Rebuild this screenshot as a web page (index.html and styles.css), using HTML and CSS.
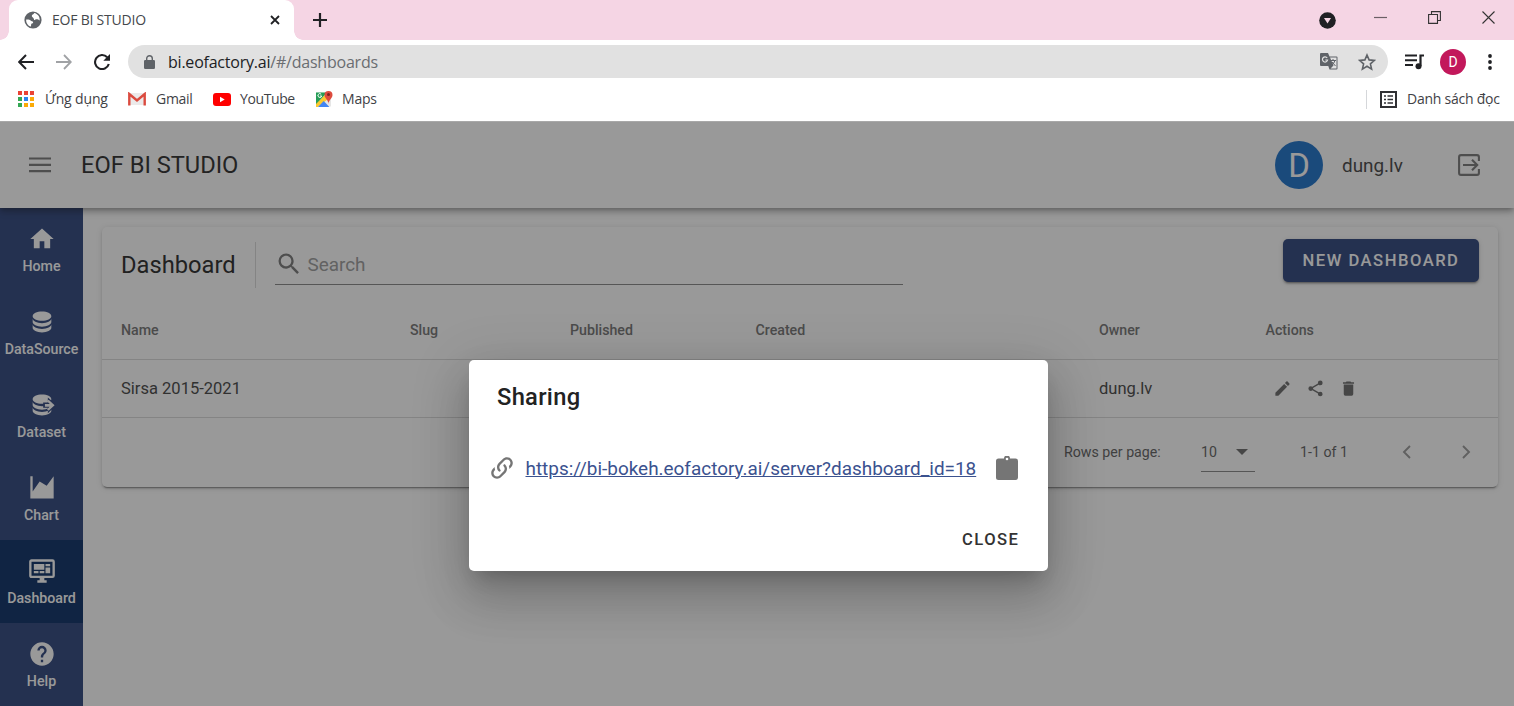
FILE: index.html
```html
<!DOCTYPE html>
<html lang="vi">
<head>
<meta charset="utf-8">
<title>EOF BI STUDIO</title>
<link rel="stylesheet" href="styles.css">
</head>
<body>
<div class="browser">
  <div class="tabstrip">
    <div class="tab">
      <svg class="globe" viewBox="0 0 18 18"><circle cx="9" cy="9" r="8.6" fill="#5f6368"/><path d="M2.2 8.6C3.8 8.6 5.6 8.4 6.6 9.4c.7.9 2.2.7 2.5 1.6.3 1-.8 1.6-1.8 1.8-.3.8-.2 1.9-.3 2.8C4 15 1.8 12 2.200 8.600zM10.200 2.100C9.800 3.600 7.700 3.500 7.800 5c.1 1.200 1.500 1.200 1.700 2.300.2 1 1.500 1.300 2.400 1.100 1.100-.3 2.700.4 3.800 1.100.3-3.700-2-6.700-5.500-7.400z" fill="#fff"/></svg>
      <span class="tab-title">EOF BI STUDIO</span>
      <svg class="tab-close" viewBox="0 0 10 10"><path d="M1 1l8 8M9 1l-8 8" stroke="#202124" stroke-width="1.8"/></svg>
    </div>
    <svg class="tab-new" viewBox="0 0 14 14"><path d="M7 0v14M0 7h14" stroke="#202124" stroke-width="2.2"/></svg>
    <div class="window-controls">
      <svg width="17" height="17" viewBox="0 0 17 17"><circle cx="8.500" cy="8.500" r="8.300" fill="#202124"/><path d="M5 6h7l-3.500 5.500z" fill="#f5d5e4"/></svg>
      <svg class="minimize" width="13" height="13" viewBox="0 0 13 13"><path d="M0 6.500h13" stroke="#6b5f65" stroke-width="1.200"/></svg>
      <svg class="restore" width="13" height="13" viewBox="0 0 13 13"><path d="M.6 3.500h8.900v8.900H.6zM3.500 3.500V.6h8.900v8.900H9.500" fill="none" stroke="#333" stroke-width="1.100"/></svg>
      <svg class="close" width="13" height="13" viewBox="0 0 13 13"><path d="M.5.5l12 12M12.500.5l-12 12" stroke="#333" stroke-width="1.100"/></svg>
    </div>
  </div>

  <div class="toolbar">
    <svg class="nav" viewBox="0 0 16 16"><path d="M16 8H1.500M8 1L1.200 8 8 15" fill="none" stroke="#202124" stroke-width="2"/></svg>
    <svg class="nav" viewBox="0 0 16 16"><path d="M0 8h14.500M8 1l6.800 7L8 15" fill="none" stroke="#a0a2a5" stroke-width="1.800"/></svg>
    <svg class="nav" viewBox="0 0 16 16"><path d="M14.800 10A7 7 0 1 1 13.200 3.300" fill="none" stroke="#202124" stroke-width="2.100"/><path d="M16 0v6.700H9.300z" fill="#202124"/></svg>
    <div class="address">
      <svg class="lock" viewBox="0 0 11 14"><path d="M1.200 5h8.600q1.200 0 1.200 1.200v6.600q0 1.200-1.200 1.200H1.200Q0 14 0 12.800V6.200Q0 5 1.200 5z" fill="#5f6368"/><path d="M2.700 6V3.500a2.800 2.800 0 0 1 5.600 0V6" fill="none" stroke="#5f6368" stroke-width="1.400"/></svg>
      <span class="url"><b>bi.eofactory.ai</b>/#/dashboards</span>
      <svg class="translate" viewBox="0 0 18 17"><path d="M1 0h7l1.500 3.500H16.500Q17.500 3.500 17.500 4.500v11q0 1-1 1H9.500L8.300 13H1q-1 0-1-1V1q0-1 1-1z" fill="#5f6368"/><path d="M10 4.500h6.500v11h-6l3-3z" fill="#e1e1e1"/><path d="M10.500 7.500h5.500M13 6v1.500M15 7.500q-.8 3-3.500 4.500M12 9l3.500 4" fill="none" stroke="#5f6368" stroke-width="1"/><path d="M7.200 5A2.600 2.600 0 1 0 7.600 7H5.300" fill="none" stroke="#e1e1e1" stroke-width="1.200"/></svg>
      <svg class="star" viewBox="0 0 18 18"><path d="M9 2l2.100 4.900 5.300.5-4 3.500 1.200 5.200L9 13.300l-4.600 2.800 1.200-5.200-4-3.500 5.300-.5z" fill="none" stroke="#5f6368" stroke-width="1.600"/></svg>
    </div>
    <svg class="media" viewBox="0 0 20 16"><path d="M0 1.500h12M0 6.200h12M0 11h8" stroke="#202124" stroke-width="2"/><path d="M15.500 12V1.500H19" fill="none" stroke="#202124" stroke-width="2.200"/><circle cx="13.500" cy="12.300" r="3" fill="#202124"/></svg>
    <span class="profile">D</span>
    <svg class="more" viewBox="0 0 4 16"><circle cx="2" cy="2" r="1.900" fill="#202124"/><circle cx="2" cy="8" r="1.900" fill="#202124"/><circle cx="2" cy="14" r="1.900" fill="#202124"/></svg>
  </div>

  <div class="bookmarks">
    <svg class="bm-icon" viewBox="0 0 16 16"><g fill="#ea4335"><path d="M0 0h4v4H0zM6 0h4v4H6zM12 0h4v4h-4z"/></g><path d="M0 6h4v4H0zM0 12h4v4H0z" fill="#34a853"/><path d="M6 6h4v4H6z" fill="#2a85f0"/><path d="M12 6h4v4h-4zM12 12h4v4h-4zM6 12h4v4H6z" fill="#fbab08"/></svg>
    <span class="bm-text apps">Ứng dụng</span>
    <svg class="bm-icon gmail" viewBox="0 0 18 14"><path d="M1 1h16v12H1z" fill="#eceaea"/><path d="M1.300 13.500V2L9 8.500 16.700 2v11.500" fill="none" stroke="#db4b3f" stroke-width="2.400"/></svg>
    <span class="bm-text gm">Gmail</span>
    <svg class="bm-icon youtube" viewBox="0 0 18 13"><rect width="18" height="13" rx="3" fill="#f00"/><path d="M7 3.800v5.400l4.700-2.700z" fill="#fff"/></svg>
    <span class="bm-text yt">YouTube</span>
    <svg class="bm-icon maps" viewBox="0 0 18 18"><path d="M1 2.500h15v14H1z" fill="#e6e6e6"/><path d="M1 2.500h11L1 15z" fill="#269d57"/><path d="M1 14L11 4l2 5-10 8H1z" fill="#fbc92f"/><path d="M3 17l5.700-6 5.700 6z" fill="#4285f4"/><path d="M13.500 14c0-4-4-5.500-4-9a4 4 0 0 1 8 0c0 3.500-4 5-4 9z" fill="#dd4b3e"/><circle cx="13.500" cy="4.500" r="1.500" fill="#7f2320"/><path d="M6.200 4.200A1.900 1.900 0 1 0 6.700 6H5" fill="none" stroke="#fff"/></svg>
    <span class="bm-text mp">Maps</span>
    <div class="reading">
      <svg viewBox="0 0 17 17"><path d="M1 1h15v15H1z" fill="none" stroke="#303134" stroke-width="2"/><path d="M4 5h2M4 8.500h2M4 12h2M7.500 5H13M7.500 8.500H13M7.500 12H13" stroke="#303134" stroke-width="1.600"/></svg>
      <span class="bm-text rl">Danh sách đọc</span>
    </div>
  </div>
</div>

<div class="app">
  <header class="appbar">
    <svg class="menu-icon" viewBox="0 0 22 16"><path d="M0 1.500h22M0 7.800h22M0 14.100h22" stroke="#757575" stroke-width="2.200"/></svg>
    <h1>EOF BI STUDIO</h1>
    <span class="avatar">D</span>
    <span class="username">dung.lv</span>
    <svg class="logout" viewBox="0 0 22 22"><path d="M20.900 7V3q0-1.900-1.900-1.900H3Q1.100 1.100 1.100 3v16q0 1.900 1.900 1.900h16q1.900 0 1.900-1.900v-4M5 11h14M14 5.800L19.200 11 14 16.200" fill="none" stroke="#757575" stroke-width="2.100"/></svg>
  </header>

  <div class="body">
    <nav class="sidebar">
      <a class="item"><svg viewBox="0 0 24 24"><path d="M10,20V14H14V20H19V12H22L12,3L2,12H5V20H10Z"/></svg><span>Home</span></a>
      <a class="item"><svg viewBox="0 0 24 24"><path d="M12,3C7.580,3 4,4.790 4,7C4,9.210 7.580,11 12,11C16.420,11 20,9.210 20,7C20,4.790 16.420,3 12,3M4,9V12C4,14.210 7.580,16 12,16C16.420,16 20,14.210 20,12V9C20,11.210 16.420,13 12,13C7.580,13 4,11.210 4,9M4,14V17C4,19.210 7.580,21 12,21C16.420,21 20,19.210 20,17V14C20,16.210 16.420,18 12,18C7.580,18 4,16.210 4,14Z"/></svg><span>DataSource</span></a>
      <a class="item"><svg viewBox="0 0 24 24"><path d="M12,3C7.580,3 4,4.790 4,7C4,9.210 7.580,11 12,11C16.420,11 20,9.210 20,7C20,4.790 16.420,3 12,3M4,9V12C4,14.210 7.580,16 12,16C16.420,16 20,14.210 20,12V9C20,11.210 16.420,13 12,13C7.580,13 4,11.210 4,9M4,14V17C4,19.210 7.580,21 12,21C16.420,21 20,19.210 20,17V14C20,16.210 16.420,18 12,18C7.580,18 4,16.210 4,14Z"/><path class="cut" d="M13 9.800h4V5.500l7.500 6.500-7.500 7v-4.600h-4z"/><path d="M14.500 11.200h4V11l-2.200-2.200 1.400-1.400 5.100 4.800-5.100 4.800-1.400-1.400 2.200-2.200h-4z"/></svg><span>Dataset</span></a>
      <a class="item"><svg viewBox="0 0 24 24"><path d="M2 2h2v13l6-8.500 6 3.500 6-8V21H2z"/></svg><span>Chart</span></a>
      <a class="item active"><svg viewBox="0 0 24 24"><path d="M21,16V4H3V16H21M21,2A2,2 0 0,1 23,4V16A2,2 0 0,1 21,18H14V20H16V22H8V20H10V18H3C1.890,18 1,17.100 1,16V4C1,2.890 1.890,2 3,2H21M5,6H14V11H5V6M15,6H19V8H15V6M19,9V14H15V9H19M5,12H9V14H5V12M10,12H14V14H10V12Z"/></svg><span>Dashboard</span></a>
      <a class="item"><svg viewBox="0 0 24 24"><path d="M15.070,11.250L14.170,12.170C13.450,12.890 13,13.500 13,15H11V14.500C11,13.390 11.450,12.390 12.170,11.670L13.410,10.410C13.780,10.050 14,9.550 14,9C14,7.890 13.100,7 12,7A2,2 0 0,0 10,9H8A4,4 0 0,1 12,5A4,4 0 0,1 16,9C16,9.880 15.640,10.670 15.070,11.250M13,19H11V17H13M12,2A10,10 0 0,0 2,12A10,10 0 0,0 12,22A10,10 0 0,0 22,12C22,6.470 17.500,2 12,2Z"/></svg><span>Help</span></a>
    </nav>

    <main class="card">
      <div class="card-head">
        <h2>Dashboard</h2>
        <div class="search">
          <svg viewBox="0 0 24 24"><path d="M9.500,3A6.500,6.500 0 0,1 16,9.500C16,11.110 15.410,12.590 14.440,13.730L14.710,14H15.500L20.500,19L19,20.500L14,15.500V14.710L13.730,14.440C12.590,15.410 11.110,16 9.500,16A6.500,6.500 0 0,1 3,9.500A6.500,6.500 0 0,1 9.500,3M9.500,5C7,5 5,7 5,9.500C5,12 7,14 9.500,14C12,14 14,12 14,9.500C14,7 12,5 9.500,5Z"/></svg>
          <span>Search</span>
        </div>
        <div class="new-btn">NEW DASHBOARD</div>
      </div>
      <div class="row header-row">
        <span>Name</span><span>Slug</span><span>Published</span><span>Created</span><span>Owner</span><span>Actions</span>
      </div>
      <div class="row data-row">
        <span>Sirsa 2015-2021</span><span></span><span></span><span></span><span>dung.lv</span>
        <span class="actions">
          <svg viewBox="0 0 24 24"><path d="M20.710,7.040C21.100,6.650 21.100,6 20.710,5.630L18.370,3.290C18,2.900 17.350,2.900 16.960,3.290L15.120,5.120L18.870,8.870M3,17.250V21H6.750L17.810,9.930L14.060,6.180L3,17.250Z"/></svg>
          <svg viewBox="0 0 24 24"><path d="M18,16.080C17.240,16.080 16.560,16.380 16.040,16.850L8.910,12.700C8.960,12.470 9,12.240 9,12C9,11.760 8.960,11.530 8.910,11.300L15.960,7.190C16.500,7.690 17.210,8 18,8A3,3 0 0,0 21,5A3,3 0 0,0 18,2A3,3 0 0,0 15,5C15,5.240 15.040,5.470 15.090,5.700L8.040,9.810C7.500,9.310 6.790,9 6,9A3,3 0 0,0 3,12A3,3 0 0,0 6,15C6.790,15 7.500,14.690 8.040,14.190L15.160,18.340C15.110,18.550 15.080,18.770 15.080,19C15.080,20.610 16.390,21.910 18,21.910C19.610,21.910 20.920,20.610 20.920,19A2.920,2.920 0 0,0 18,16.080Z"/></svg>
          <svg viewBox="0 0 24 24"><path d="M19,4H15.500L14.500,3H9.500L8.500,4H5V6H19M6,19A2,2 0 0,0 8,21H16A2,2 0 0,0 18,19V7H6V19Z"/></svg>
        </span>
      </div>
      <div class="pager">
        <span class="rpp">Rows per page:</span>
        <span class="select">10<i></i></span>
        <span class="range">1-1 of 1</span>
        <svg class="chev prev" viewBox="0 0 9 14"><path d="M8 1L2 7l6 6" /></svg>
        <svg class="chev" viewBox="0 0 9 14"><path d="M1 1l6 6-6 6" /></svg>
      </div>
    </main>
  </div>

  <div class="scrim">
    <div class="dialog">
      <h3>Sharing</h3>
      <div class="link-row">
        <svg class="link-icon" viewBox="0 0 24 24"><path d="M10.590,13.410C11,13.800 11,14.440 10.590,14.830C10.200,15.220 9.560,15.220 9.170,14.830C7.220,12.880 7.220,9.710 9.170,7.760V7.760L12.710,4.220C14.660,2.270 17.830,2.270 19.780,4.220C21.730,6.170 21.730,9.340 19.780,11.290L18.290,12.780C18.300,11.960 18.170,11.140 17.890,10.360L18.360,9.880C19.540,8.710 19.540,6.810 18.360,5.640C17.190,4.460 15.290,4.460 14.120,5.640L10.590,9.170C9.410,10.340 9.410,12.240 10.590,13.410M13.410,9.170C13.800,8.780 14.440,8.780 14.830,9.170C16.780,11.120 16.780,14.290 14.830,16.240V16.240L11.290,19.780C9.340,21.730 6.170,21.730 4.220,19.780C2.270,17.830 2.270,14.660 4.220,12.710L5.710,11.220C5.700,12.040 5.830,12.860 6.110,13.650L5.640,14.120C4.460,15.290 4.460,17.190 5.640,18.360C6.810,19.540 8.710,19.540 9.880,18.360L13.410,14.830C14.590,13.660 14.590,11.760 13.410,10.590C13,10.200 13,9.560 13.410,9.170Z"/></svg>
        <a class="link">https://bi-bokeh.eofactory.ai/server?dashboard_id=18</a>
        <svg class="clip" viewBox="0 0 22 24"><path d="M2.500 2.500H8a3 3 0 0 1 6 0h5.500Q22 2.500 22 5v16.500q0 2.500-2.500 2.500h-17Q0 24 0 21.500V5q0-2.500 2.500-2.500z" fill="#757575"/><circle cx="11" cy="3" r="1.300" fill="#fff"/></svg>
      </div>
      <div class="close-btn">CLOSE</div>
    </div>
  </div>
</div>
</body>
</html>
```
FILE: styles.css
```css
* { box-sizing: border-box; }
body { margin: 0; width: 1514px; height: 706px; overflow: hidden; font-family: Roboto, sans-serif; background: #fff; }
svg { display: block; flex: none; }
h1, h2, h3 { margin: 0; font-weight: 400; }
span, a, h1, h2, h3 { white-space: nowrap; }

/* Browser chrome */
.browser { height: 122px; border-bottom: 1px solid #a8a8a8; font-family: "Open Sans", sans-serif; }
.tabstrip { height: 40px; background: #f5d5e4; display: flex; align-items: center; padding-left: 9px; }
.tab { width: 285px; height: 40px; background: #fff; border-radius: 9px 9px 0 0; display: flex; align-items: center; padding-left: 15px; position: relative; }
.tab::before, .tab::after { content: ""; position: absolute; bottom: 0; width: 9px; height: 9px; }
.tab::before { left: -9px; background: radial-gradient(circle at 0 0, #f5d5e4 8.500px, #fff 9px); }
.tab::after { right: -9px; background: radial-gradient(circle at 100% 0, #f5d5e4 8.500px, #fff 9px); }
.globe { width: 18px; height: 18px; }
.tab-title { font-size: 14px; color: #45484c; margin: -2px 0 0 10px; width: 94px; letter-spacing: -0.220px; }
.tab-close { width: 10px; height: 10px; margin-left: 124px; }
.tab-new { width: 14px; height: 14px; margin-left: 19px; }
.window-controls { margin-left: auto; padding-right: 19px; display: flex; align-items: center; }
.minimize { margin: -6px 0 0 38px; }
.restore, .close { margin: -6px 0 0 41px; }
.toolbar { height: 43px; display: flex; align-items: center; padding-left: 18px; }
.nav { width: 16px; height: 16px; margin-right: 22px; }
.nav:nth-child(3) { margin-right: 18px; }
.address { width: 1260px; height: 33px; border-radius: 17px; background: #e1e1e1; display: flex; align-items: center; padding: 0 12px 0 16px; }
.lock { width: 11px; height: 14px; }
.url { font-size: 16px; color: #6a6d71; margin-left: 13px; letter-spacing: -0.220px; }
.url b { font-weight: 400; color: #202124; }
.translate { width: 18px; height: 17px; margin-left: auto; }
.star { width: 18px; height: 18px; margin-left: 20px; }
.media { width: 20px; height: 16px; margin-left: 17px; }
.profile { width: 26px; height: 26px; border-radius: 50%; background: #c2185b; color: #fff; font: 14px/26px Roboto, sans-serif; text-align: center; margin-left: 15px; }
.more { width: 4px; height: 16px; margin-left: 22px; }
.bookmarks { height: 34px; display: flex; align-items: center; padding: 0 14px 2px 18px; }
.bm-icon { width: 16px; height: 16px; }
.bm-text { font-size: 14px; color: #3f4246; margin-top: -1px; }
.apps { margin-left: 11px; width: 64px; letter-spacing: -0.150px; }
.gmail { width: 18px; height: 14px; margin-left: 19px; }
.gm { margin-left: 10px; width: 37px; letter-spacing: -0.300px; }
.youtube { width: 18px; height: 13px; margin-left: 20px; }
.yt { margin-left: 9px; width: 55px; letter-spacing: -0.400px; }
.maps { width: 18px; height: 18px; margin-left: 20px; }
.mp { margin-left: 9px; letter-spacing: -0.200px; }
.reading { margin-left: auto; display: flex; align-items: center; border-left: 1px solid #d5d7da; padding-left: 13px; height: 19px; }
.reading svg { width: 17px; height: 17px; }
.rl { margin-left: 10px; width: 93px; letter-spacing: -0.250px; }

/* Application */
.app { height: 584px; position: relative; background: #fff; overflow: hidden; }
.appbar { height: 86px; position: relative; z-index: 1; background: #fff; box-shadow: 0 2px 5px -1px rgba(0,0,0,.3), 0 5px 6px rgba(0,0,0,.14), 0 1px 12px rgba(0,0,0,.12); display: flex; align-items: center; padding-left: 29px; }
.menu-icon { width: 22px; height: 16px; }
h1 { font-size: 23.700px; color: #262626; margin-left: 30px; letter-spacing: -0.020px; }
.avatar { width: 48px; height: 48px; border-radius: 50%; background: #156dc8; color: #fff; font-size: 33px; line-height: 49px; text-align: center; margin-left: auto; }
.username { font-size: 18.900px; color: #404040; margin-left: 19px; width: 61px; }
.logout { width: 22px; height: 22px; margin: 0 34px 0 55px; }
.body { height: 498px; display: flex; align-items: flex-start; }
.sidebar { width: 83px; height: 498px; background: #283f79; flex: none; }
.item { height: 83px; display: flex; flex-direction: column; align-items: center; color: #fff; padding-top: 17px; }
.item svg { width: 28px; height: 28px; fill: #fff; }
.item .cut { fill: #283f79; }
.item span { font-size: 14.200px; font-weight: 500; line-height: 18px; margin-top: 4px; }
.active { background: #032860; }
.card { width: 1396px; height: 260px; margin: 19px 0 0 19px; border-radius: 5px; background: #fff; box-shadow: 0 3px 1px -2px rgba(0,0,0,.3), 0 2px 2px rgba(0,0,0,.14), 0 1px 6px rgba(0,0,0,.14); }
.card-head { height: 74px; display: flex; align-items: flex-start; padding: 12px 19px 0; }
h2 { font-size: 23.700px; line-height: 46px; color: #222; width: 135px; height: 46px; margin-top: 3px; border-right: 1px solid #d8d8d8; letter-spacing: 0; }
.search { width: 628px; height: 46px; margin-left: 19px; border-bottom: 1px solid #848484; display: flex; align-items: center; }
.search svg { width: 28px; height: 28px; fill: #757575; margin-top: 5px; }
.search span { font-size: 18.900px; color: #999; margin: 5px 0 0 4.500px; }
.new-btn { width: 196px; height: 43px; margin-left: auto; border-radius: 5px; background: #283f79; color: #fff; font-size: 16.600px; font-weight: 500; letter-spacing: 1.500px; line-height: 44px; text-align: center; box-shadow: 0 3px 1px -2px rgba(0,0,0,.2), 0 2px 2px rgba(0,0,0,.2), 0 1px 5px rgba(0,0,0,.16); white-space: nowrap; }
.row { height: 58px; display: grid; grid-template-columns: 289px 160px 185.500px 343.500px 166.500px auto; align-items: center; padding-left: 19px; border-bottom: 1px solid #d8d8d8; }
.header-row { font-size: 14.200px; font-weight: 500; color: #707070; height: 59px; }
.data-row { font-size: 16.550px; color: #404040; }
.actions { display: flex; gap: 14px; padding-left: 7px; }
.actions svg { width: 19px; height: 19px; fill: #666; }
.pager { height: 69px; display: flex; align-items: center; font-size: 14.200px; color: #5c5c5c; padding-left: 962px; }
.rpp, .range { margin-top: -1px; }
.rpp { width: 137px; }
.select { width: 54px; height: 38px; border-bottom: 1px solid #848484; display: flex; align-items: center; justify-content: space-between; padding-right: 7px; }
.select i { border: 6px solid transparent; border-top-color: #666; border-bottom: 0; }
.range { margin-left: 45px; width: 102px; }
.chev { width: 9px; height: 14px; fill: none; stroke: #969696; stroke-width: 1.900; margin-top: -1px; }
.prev { margin-right: 51px; }

/* Modal */
.scrim { position: absolute; inset: 0; z-index: 2; background: rgba(33,33,33,.46); }
.dialog { position: absolute; left: 468.500px; top: 238px; width: 579.500px; height: 211px; background: #fff; border-radius: 5px; box-shadow: 0 13px 18px -8px rgba(0,0,0,.2), 0 28px 45px 4px rgba(0,0,0,.14), 0 11px 54px 9px rgba(0,0,0,.12); padding: 19px 28.500px; display: flex; flex-direction: column; }
h3 { font-size: 23.700px; line-height: 37px; font-weight: 500; color: #222; letter-spacing: .3px; }
.link-row { display: flex; align-items: center; height: 30px; margin: 37px 0 0 -9px; }
.link-icon { width: 28px; height: 28px; fill: #757575; }
.link { font-size: 18.930px; color: #3b528f; text-decoration: underline; margin-left: 9.500px; width: 451px; }
.clip { width: 22px; height: 24px; margin-left: 19.500px; }
.close-btn { align-self: flex-end; margin: 46px 0 0; font-size: 16.600px; font-weight: 500; line-height: 22px; letter-spacing: 1.500px; color: #333; }
```
